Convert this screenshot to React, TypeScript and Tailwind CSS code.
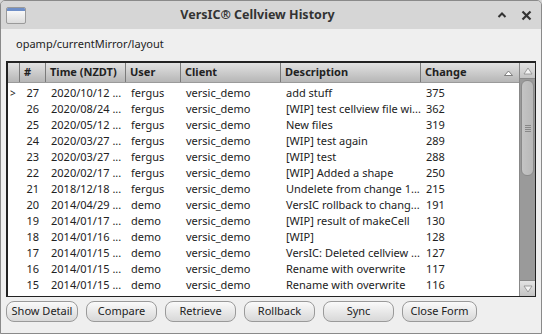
const rows = [
  ["27", "2020/10/12 ...", "fergus", "versic_demo", "add stuff", "375"],
  ["26", "2020/08/24 ...", "fergus", "versic_demo", "[WIP] test cellview file wi...", "362"],
  ["25", "2020/05/12 ...", "fergus", "versic_demo", "New files", "319"],
  ["24", "2020/03/27 ...", "fergus", "versic_demo", "[WIP] test again", "289"],
  ["23", "2020/03/27 ...", "fergus", "versic_demo", "[WIP] test", "288"],
  ["22", "2020/02/17 ...", "fergus", "versic_demo", "[WIP] Added a shape", "250"],
  ["21", "2018/12/18 ...", "fergus", "versic_demo", "Undelete from change 1...", "215"],
  ["20", "2014/04/29 ...", "demo", "versic_demo", "VersIC rollback to chang...", "191"],
  ["19", "2014/01/17 ...", "demo", "versic_demo", "[WIP] result of makeCell", "130"],
  ["18", "2014/01/16 ...", "demo", "versic_demo", "[WIP]", "128"],
  ["17", "2014/01/15 ...", "demo", "versic_demo", "VersIC: Deleted cellview ...", "127"],
  ["16", "2014/01/15 ...", "demo", "versic_demo", "Rename with overwrite", "117"],
  ["15", "2014/01/15 ...", "demo", "versic_demo", "Rename with overwrite", "116"],
];

const buttons = ["Show Detail", "Compare", "Retrieve", "Rollback", "Sync", "Close Form"];

export default function App() {
  return (
    <div className="w-[542px] h-[334px] bg-[#d6d6d6] font-['Noto_Sans',sans-serif] text-[11px] text-[#222]">
      <div className="w-full h-full flex flex-col border border-[#8a8a8a] rounded-t-[5px] overflow-hidden">
        {/* title bar */}
        <div className="h-[28px] flex items-center bg-[#d6d6d6]">
          <div className="ml-[5px] w-[20px] h-[17px] rounded-[2px] border border-[#9a9a9a] bg-gradient-to-b from-white to-[#dcdcdc] overflow-hidden">
            <div className="h-[3px] bg-[#6f8fc8]" />
          </div>
          <div className="flex-1 text-center font-bold text-[12.5px] text-[#333] -ml-[8px] whitespace-nowrap">VersIC® Cellview History</div>
          <svg width="10" height="8" viewBox="0 0 10 8" className="mr-[14px]">
            <path d="M1.5 6 L5 2.5 L8.5 6" fill="none" stroke="#333" strokeWidth="2" />
          </svg>
          <svg width="11" height="11" viewBox="0 0 11 11" className="mr-[9px]">
            <path d="M1.5 1.5 L9.5 9.5 M9.5 1.5 L1.5 9.5" fill="none" stroke="#333" strokeWidth="2.2" />
          </svg>
        </div>

        {/* body */}
        <div className="flex-1 bg-[#efefef] flex flex-col px-[5px]">
          <div className="h-[32px] flex items-center pl-[10px] pb-[2px] whitespace-nowrap">opamp/currentMirror/layout</div>

          <div className="h-[236px] border border-[#222] border-t-2 border-l-2 bg-white flex">
            <div className="flex-1 flex flex-col whitespace-nowrap">
              <div className="h-[20px] flex items-center bg-gradient-to-b from-[#e2e2e2] to-[#b6b6b6] border-b border-[#9a9a9a] font-bold">
                <div className="w-[12px] h-full border-r border-[#7a7a7a] shrink-0" />
                <div className="w-[26px] h-full border-r border-[#7a7a7a] flex items-center pl-[4px] shrink-0">#</div>
                <div className="w-[80px] h-full border-r border-[#7a7a7a] flex items-center pl-[4px] shrink-0">Time (NZDT)</div>
                <div className="w-[55px] h-full border-r border-[#7a7a7a] flex items-center pl-[4px] shrink-0">User</div>
                <div className="w-[100px] h-full border-r border-[#7a7a7a] flex items-center pl-[4px] shrink-0">Client</div>
                <div className="w-[140px] h-full border-r border-[#7a7a7a] flex items-center pl-[4px] shrink-0">Description</div>
                <div className="flex-1 h-full flex items-center justify-between pl-[4px] pr-[6px]">
                  <span>Change</span>
                  <svg width="9" height="6" viewBox="0 0 9 6">
                    <path d="M0.5 5.5 L4.5 1 L8.5 5.5 Z" fill="#fff" stroke="#666" strokeWidth="0.8" />
                  </svg>
                </div>
              </div>
              <div className="flex-1 flex flex-col pt-[2px]">
                {rows.map((r, i) => (
                  <div key={r[0]} className="h-[16px] flex items-center">
                    <div className="w-[12px] pl-[2px] text-[10px] shrink-0">{i === 0 ? ">" : ""}</div>
                    <div className="w-[26px] text-right pr-[7px] shrink-0">{r[0]}</div>
                    <div className="w-[80px] pl-[5px] shrink-0">{r[1]}</div>
                    <div className="w-[55px] pl-[5px] shrink-0">{r[2]}</div>
                    <div className="w-[100px] pl-[5px] shrink-0">{r[3]}</div>
                    <div className="w-[140px] pl-[5px] overflow-hidden shrink-0">{r[4]}</div>
                    <div className="flex-1 pl-[5px]">{r[5]}</div>
                  </div>
                ))}
              </div>
            </div>

            {/* scrollbar */}
            <div className="w-[16px] bg-[#9a9a9a] flex flex-col border-l border-[#888] shrink-0">
              <div className="h-[16px] bg-gradient-to-b from-[#e4e4e4] to-[#c4c4c4] border-b border-[#888] flex items-center justify-center">
                <svg width="10" height="8" viewBox="0 0 10 8">
                  <path d="M1 7 L5 1 L9 7 Z" fill="#f4f4f4" stroke="#8a8a8a" strokeWidth="0.8" />
                </svg>
              </div>
              <div className="h-[96px] mt-[1px] mx-[1px] rounded-[6px] bg-gradient-to-r from-[#c4c4c4] to-[#b8b8b8] border border-[#8a8a8a] flex flex-col items-center justify-center gap-[1px]">
                <div className="w-[6px] h-[1px] bg-[#888]" />
                <div className="w-[6px] h-[1px] bg-[#888]" />
                <div className="w-[6px] h-[1px] bg-[#888]" />
                <div className="w-[6px] h-[1px] bg-[#888]" />
              </div>
              <div className="flex-1" />
              <div className="h-[16px] bg-gradient-to-b from-[#e4e4e4] to-[#c4c4c4] border-t border-[#888] flex items-center justify-center">
                <svg width="10" height="8" viewBox="0 0 10 8">
                  <path d="M1 1 L5 7 L9 1 Z" fill="#f4f4f4" stroke="#8a8a8a" strokeWidth="0.8" />
                </svg>
              </div>
            </div>
          </div>

          <div className="flex gap-[8px] mt-[4px]">
            {buttons.map((b, i) => (
              <button
                key={b}
                className={`${i === 0 ? "w-[72px]" : i === 5 ? "w-[75px]" : "w-[71px]"} shrink-0 whitespace-nowrap h-[21px] rounded-[8px] border border-[#9a9a9a] bg-gradient-to-b from-[#fafafa] to-[#d8d8d8] text-[11px] text-[#222] flex items-center justify-center`}
              >
                {b}
              </button>
            ))}
          </div>
        </div>
      </div>
    </div>
  );
}
